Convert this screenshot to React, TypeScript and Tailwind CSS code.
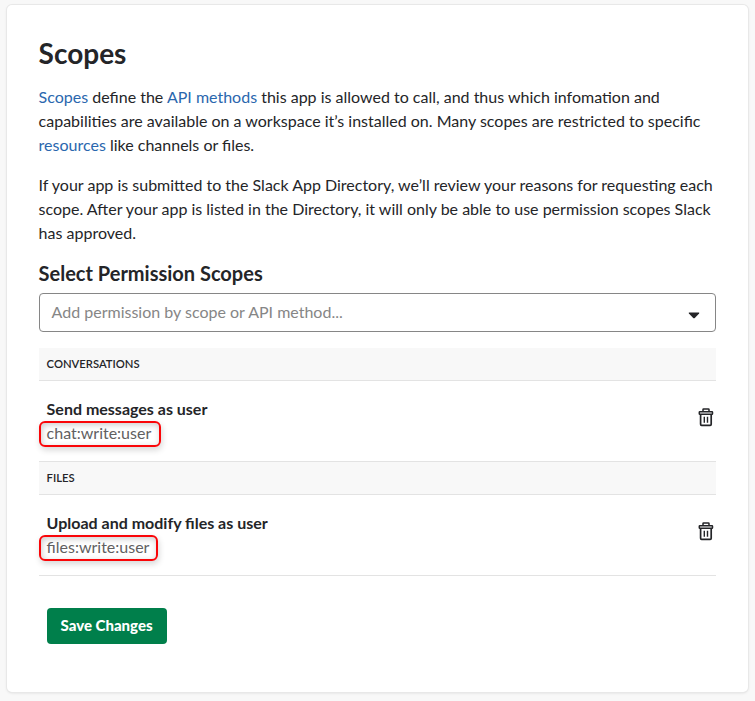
import type { ReactNode } from "react";

function TrashIcon() {
  return (
    <svg width="16" height="19" viewBox="0 0 16 19" fill="none" stroke="#242528" aria-hidden="true">
      <path d="M5 3.2V1.6Q5 1 5.6 1h4.8Q11 1 11 1.6v1.6" strokeWidth="1.5" />
      <rect x="1.3" y="3.7" width="13.2" height="2.5" rx="0.5" strokeWidth="1.5" />
      <path d="M2.6 6.3v10q0 1 1 1h8.6q1 0 1-1v-10" strokeWidth="1.7" />
      <path d="M6.3 8.8v6M9.5 8.8v6" strokeWidth="1.4" />
    </svg>
  );
}

function Link({ children }: { children: ReactNode }) {
  return (
    <a href="#" className="text-[#2a67ae]">
      {children}
    </a>
  );
}

function ScopeGroup({ group, title, scope, width }: { group: string; title: string; scope: string; width: string }) {
  return (
    <section>
      <h3 className="flex h-[33px] items-center border-b border-[#e3e3e3] bg-[#f8f8f8] pl-2 text-[11.25px] leading-4 font-semibold">
        {group}
      </h3>
      <div className="flex h-[81px] items-start justify-between border-b border-[#e3e3e3] pt-4 pl-2">
        <div>
          <div className="text-base leading-6 font-bold">{title}</div>
          <div
            className={`-ml-2 flex h-[26px] items-center rounded-[6px] border-2 border-[#fa0508] pb-[2px] pl-1.5 text-base leading-5 text-[#616061] shadow-[1px_3px_6px_rgba(0,0,0,0.16),inset_1px_2px_6px_rgba(0,0,0,0.2)] ${width}`}
          >
            {scope}
          </div>
        </div>
        <button type="button" aria-label="Remove scope" className="mt-[11px] mr-[2px]">
          <TrashIcon />
        </button>
      </div>
    </section>
  );
}

export default function App() {
  return (
    <div className="h-[701px] bg-[#f8f8f8] pt-[5px] pl-[7px] font-[Lato,sans-serif] text-[#242528]">
      <main className="h-[687px] w-[741px] rounded-[5px] bg-white px-[31.6px] pt-[31px] shadow-[0_0_0_1px_#e8e8e8,0_1px_3px_rgba(0,0,0,0.12)]">
        <h1 className="text-[28px] leading-[34px] font-bold">Scopes</h1>
        <p className="mt-[15px] text-base leading-6">
          <Link>Scopes</Link> define the <Link>API methods</Link> this app is allowed to call, and thus which infomation and
          <br />
          capabilities are available on a workspace it’s installed on. Many scopes are restricted to specific
          <br />
          <Link>resources</Link> like channels or files.
        </p>
        <p className="mt-4 text-base leading-6 whitespace-nowrap">
          If your app is submitted to the Slack App Directory, we’ll review your reasons for requesting each
          <br />
          scope. After your app is listed in the Directory, it will only be able to use permission scopes Slack
          <br />
          has approved.
        </p>
        <h2 className="mt-4 text-xl leading-6 font-bold">Select Permission Scopes</h2>
        <div className="mt-2 flex h-[39px] w-[677px] items-center justify-between rounded-[4px] border border-[#868686] pr-[15px] pl-3 text-base text-[#868686]">
          <span className="pb-[2px]">Add permission by scope or API method...</span>
          <svg width="12" height="7" viewBox="0 0 12 7" className="mt-[5px]" aria-hidden="true">
            <path d="M1.2.5h9.6q.9.2.3 1L6.8 5.9q-.8.7-1.6 0L.9 1.5Q.3.7 1.2.5" fill="#242528" />
          </svg>
        </div>
        <div className="mt-4 w-[677px]">
          <ScopeGroup group="CONVERSATIONS" title="Send messages as user" scope="chat:write:user" width="w-[122px]" />
          <ScopeGroup group="FILES" title="Upload and modify files as user" scope="files:write:user" width="w-[119px]" />
        </div>
        <button type="button" className="mt-8 ml-2 h-9 w-[120px] rounded-[4px] bg-[#007f4b] pb-[2px] text-[15px] font-black text-white">
          Save Changes
        </button>
      </main>
    </div>
  );
}
